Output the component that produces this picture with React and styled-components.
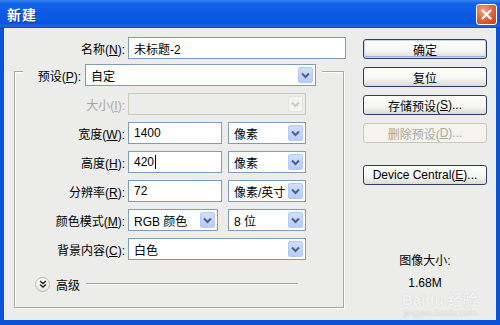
import React from 'react';
import styled, { createGlobalStyle } from 'styled-components';

const GlobalStyle = createGlobalStyle`
  html, body {
    margin: 0;
    padding: 0;
    background: #ffffff;
  }
  body {
    font-family: "Liberation Sans", "Noto Sans CJK SC", sans-serif;
    font-size: 12px;
  }
`;

const Chevron = ({ color = '#4D6185' }) => (
    <svg width="9" height="7" viewBox="0 0 9 7">
        <path d="M1 1.5 L4.5 5 L8 1.5" fill="none" stroke={color} strokeWidth="2" />
    </svg>
);

const DoubleChevron = () => (
    <svg width="8" height="8" viewBox="0 0 8 8">
        <path d="M1 1 L4 3.5 L7 1 M1 4.5 L4 7 L7 4.5" fill="none" stroke="#222" strokeWidth="1.4" />
    </svg>
);

const CloseX = () => (
    <svg width="11" height="11" viewBox="0 0 11 11">
        <path d="M1.5 1.5 L9.5 9.5 M9.5 1.5 L1.5 9.5" stroke="#fff" strokeWidth="2.2" strokeLinecap="round" />
    </svg>
);

const Combo = ({ width, children, disabled }) => (
    <Select $w={width} $disabled={disabled}>
        <span>{children}</span>
        <DropBtn $disabled={disabled}>
            <Chevron color={disabled ? '#C8C8C4' : '#4D6185'} />
        </DropBtn>
    </Select>
);

const App = () => {
    return (
        <>
            <GlobalStyle />
            <Dialog>
                <TitleBar>
                    <Title>新建</Title>
                    <CloseButton><CloseX /></CloseButton>
                </TitleBar>

                <Body>
                    <LeftCol>
                        <Row>
                            <Label $w={111}>名称(<u>N</u>):</Label>
                            <Input $w={218}>未标题-2</Input>
                        </Row>

                        <GroupBox>
                            <Legend>
                                <Label $w={46}>预设(<u>P</u>):</Label>
                                <Combo width={231}>自定</Combo>
                            </Legend>

                            <Row>
                                <Label $disabled>大小(<u>I</u>):</Label>
                                <Combo width={178} disabled />
                            </Row>
                            <Row>
                                <Label>宽度(<u>W</u>):</Label>
                                <Fields>
                                    <Input $w={94}>1400</Input>
                                    <Combo width={78}>像素</Combo>
                                </Fields>
                            </Row>
                            <Row>
                                <Label>高度(<u>H</u>):</Label>
                                <Fields>
                                    <Input $w={94}>420<Caret /></Input>
                                    <Combo width={78}>像素</Combo>
                                </Fields>
                            </Row>
                            <Row>
                                <Label>分辨率(<u>R</u>):</Label>
                                <Fields>
                                    <Input $w={94}>72</Input>
                                    <Combo width={78}>像素/英寸</Combo>
                                </Fields>
                            </Row>
                            <Row>
                                <Label>颜色模式(<u>M</u>):</Label>
                                <Fields $gap={10}>
                                    <Combo width={90}>RGB 颜色</Combo>
                                    <Combo width={78}>8 位</Combo>
                                </Fields>
                            </Row>
                            <Row>
                                <Label>背景内容(<u>C</u>):</Label>
                                <Combo width={178}>白色</Combo>
                            </Row>

                            <Advanced>
                                <Toggle><DoubleChevron /></Toggle>
                                <span>高级</span>
                                <Rule />
                            </Advanced>
                        </GroupBox>
                    </LeftCol>

                    <RightCol>
                        <Button $default>确定</Button>
                        <Button>复位</Button>
                        <Button>存储预设(<u>S</u>)...</Button>
                        <Button $disabled>删除预设(<u>D</u>)...</Button>
                        <Button $mt={14}>Device Central(<u>E</u>)...</Button>

                        <Info>
                            <div>图像大小:</div>
                            <InfoValue>1.68M</InfoValue>
                        </Info>
                    </RightCol>
                </Body>

                <Watermark>
                    <span className='big'>Bai<b>du</b> 经验</span>
                    <span className='small'>jingyan.baidu.com</span>
                </Watermark>
            </Dialog>
        </>
    );
};

export default App;

const Dialog = styled.div`
    position : relative;
    width : 500px;
    height : 325px;
    display : flex;
    flex-direction : column;
    overflow : hidden;
`;

const TitleBar = styled.div`
    height : 28px;
    flex-shrink : 0;
    box-sizing : border-box;
    display : flex;
    align-items : center;
    justify-content : space-between;
    padding : 0 3px 0 7px;
    background : linear-gradient(#3A86F4 0%, #1465EA 12%, #0A5BE2 50%, #0758DE 85%, #2266D8 93%, #0A49B8 100%);
`;

const Title = styled.div`
    color : white;
    font-family : "Noto Sans CJK SC", sans-serif;
    font-weight : bold;
    font-size : 14px;
    letter-spacing : 1px;
    text-shadow : 1px 1px 0 #0A2E86;
`;

const CloseButton = styled.div`
    width : 21px;
    height : 21px;
    box-sizing : border-box;
    border : 1px solid #ffffff;
    border-radius : 3px;
    display : flex;
    align-items : center;
    justify-content : center;
    background : radial-gradient(circle at 35% 30%, #F2A58A 0%, #E2673F 45%, #C2401B 100%);
`;

const Body = styled.div`
    flex : 1;
    display : flex;
    gap : 17px;
    padding : 9px 9px 0 10px;
    background : #ECECEA;
    border-style : solid;
    border-color : #0A52D8;
    border-width : 0 4px 5px 4px;
`;

const LeftCol = styled.div`
    width : 332px;
    display : flex;
    flex-direction : column;
`;

const Row = styled.div`
    display : flex;
    align-items : center;
    gap : 3px;
    height : 22px;
`;

const Label = styled.div`
    width : ${p => p.$w || 110}px;
    flex-shrink : 0;
    text-align : right;
    white-space : nowrap;
    color : ${p => p.$disabled ? '#ACA899' : '#000000'};
`;

const Fields = styled.div`
    display : flex;
    gap : ${p => p.$gap || 6}px;
`;

const Input = styled.div`
    width : ${p => p.$w}px;
    height : 22px;
    box-sizing : border-box;
    border : 1px solid #7F9DB9;
    background : white;
    padding : 0 5px;
    display : flex;
    align-items : center;
`;

const Caret = styled.span`
    display : inline-block;
    width : 1px;
    height : 14px;
    margin-left : 1px;
    background : #000;
`;

const Select = styled.div`
    width : ${p => p.$w}px;
    height : 22px;
    box-sizing : border-box;
    border : 1px solid ${p => p.$disabled ? '#C9C7BA' : '#7F9DB9'};
    background : ${p => p.$disabled ? '#ECECEA' : 'white'};
    padding-left : 5px;
    display : flex;
    align-items : center;
    justify-content : space-between;
    white-space : nowrap;
`;

const DropBtn = styled.div`
    width : 15px;
    height : 16px;
    margin-right : 2px;
    box-sizing : border-box;
    border : 1px solid ${p => p.$disabled ? '#E2E2DE' : '#B4C8F4'};
    border-radius : 2px;
    background : ${p => p.$disabled ? '#F2F2EF' : 'linear-gradient(#D2DEFC, #B9CCF8)'};
    display : flex;
    align-items : center;
    justify-content : center;
`;

const GroupBox = styled.div`
    width : 330px;
    box-sizing : border-box;
    margin-top : 12px;
    padding-bottom : 15px;
    border : 1px solid #A8A7A2;
    box-shadow : inset 1px 1px 0 #ffffff, 1px 1px 0 #ffffff;
    display : flex;
    flex-direction : column;
    gap : 7px;
`;

const Legend = styled.div`
    align-self : flex-start;
    display : flex;
    align-items : center;
    gap : 4px;
    margin : -8px 0 0 8px;
    padding : 0 6px 0 12px;
    background : #ECECEA;
`;

const Advanced = styled.div`
    display : flex;
    align-items : center;
    height : 16px;
    margin-top : 9px;
    padding : 0 45px 0 20px;

    span{
        margin-left : 6px;
    }
`;

const Toggle = styled.div`
    width : 15px;
    height : 15px;
    box-sizing : border-box;
    border-radius : 50%;
    border : 1px solid #B8B8B4;
    background : linear-gradient(#FFFFFF, #E4E4E0);
    display : flex;
    align-items : center;
    justify-content : center;
`;

const Rule = styled.div`
    flex : 1;
    height : 1px;
    margin-left : 6px;
    background : #A8A7A2;
    border-bottom : 1px solid #ffffff;
`;

const RightCol = styled.div`
    width : 124px;
    padding-top : 2px;
    display : flex;
    flex-direction : column;
    gap : 8px;
`;

const Button = styled.div`
    height : 20px;
    box-sizing : border-box;
    margin-top : ${p => p.$mt || 0}px;
    display : flex;
    align-items : center;
    justify-content : center;
    border : 1px solid ${p => p.$disabled ? '#CAC8BC' : '#2B3F63'};
    border-radius : 3px;
    background : ${p => p.$disabled ? '#F4F3EE' : 'linear-gradient(#FFFFFF 0%, #F5F5F2 60%, #DCDAD3 100%)'};
    color : ${p => p.$disabled ? '#ACA899' : '#000000'};
    box-shadow : ${p => p.$default ? 'inset 0 0 0 1px #C5D6F2, inset 0 -1px 0 1px #98B2DE' : 'none'};
    white-space : nowrap;
`;

const Info = styled.div`
    margin-top : 61px;
    text-align : center;
    line-height : 15px;
`;

const InfoValue = styled.div`
    margin-top : 7px;
`;

const Watermark = styled.div`
    position : absolute;
    left : 402px;
    top : 292px;
    display : flex;
    flex-direction : column;
    align-items : center;
    pointer-events : none;
    color : rgba(255, 255, 255, 0.8);
    text-shadow : 0 0 1px rgba(160, 160, 160, 0.6);

    .big{
        font-size : 15px;
        font-weight : bold;
        line-height : 16px;
    }

    .small{
        font-size : 9px;
        line-height : 11px;
        color : rgba(255, 255, 255, 0.6);
    }
`;
